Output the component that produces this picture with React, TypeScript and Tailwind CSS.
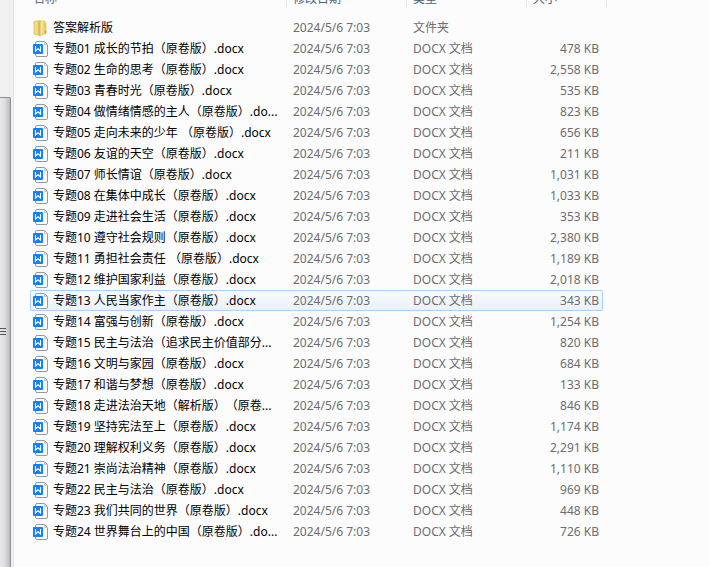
import React, { useState } from "react";

type FileEntry = {
  name: string;
  kind: "folder" | "docx";
  size: string;
};

const MODIFIED = "2024/5/6 7:03";

const files: FileEntry[] = [
  { name: "答案解析版", kind: "folder", size: "" },
  { name: "专题01 成长的节拍（原卷版）.docx", kind: "docx", size: "478 KB" },
  { name: "专题02 生命的思考（原卷版）.docx", kind: "docx", size: "2,558 KB" },
  { name: "专题03 青春时光（原卷版）.docx", kind: "docx", size: "535 KB" },
  { name: "专题04 做情绪情感的主人（原卷版）.do...", kind: "docx", size: "823 KB" },
  { name: "专题05 走向未来的少年 （原卷版）.docx", kind: "docx", size: "656 KB" },
  { name: "专题06 友谊的天空（原卷版）.docx", kind: "docx", size: "211 KB" },
  { name: "专题07 师长情谊（原卷版）.docx", kind: "docx", size: "1,031 KB" },
  { name: "专题08 在集体中成长（原卷版）.docx", kind: "docx", size: "1,033 KB" },
  { name: "专题09 走进社会生活（原卷版）.docx", kind: "docx", size: "353 KB" },
  { name: "专题10 遵守社会规则（原卷版）.docx", kind: "docx", size: "2,380 KB" },
  { name: "专题11 勇担社会责任 （原卷版）.docx", kind: "docx", size: "1,189 KB" },
  { name: "专题12 维护国家利益（原卷版）.docx", kind: "docx", size: "2,018 KB" },
  { name: "专题13 人民当家作主（原卷版）.docx", kind: "docx", size: "343 KB" },
  { name: "专题14 富强与创新（原卷版）.docx", kind: "docx", size: "1,254 KB" },
  { name: "专题15 民主与法治（追求民主价值部分...", kind: "docx", size: "820 KB" },
  { name: "专题16 文明与家园（原卷版）.docx", kind: "docx", size: "684 KB" },
  { name: "专题17 和谐与梦想（原卷版）.docx", kind: "docx", size: "133 KB" },
  { name: "专题18 走进法治天地（解析版）（原卷...", kind: "docx", size: "846 KB" },
  { name: "专题19 坚持宪法至上（原卷版）.docx", kind: "docx", size: "1,174 KB" },
  { name: "专题20 理解权利义务（原卷版）.docx", kind: "docx", size: "2,291 KB" },
  { name: "专题21 崇尚法治精神（原卷版）.docx", kind: "docx", size: "1,110 KB" },
  { name: "专题22 民主与法治（原卷版）.docx", kind: "docx", size: "969 KB" },
  { name: "专题23 我们共同的世界（原卷版）.docx", kind: "docx", size: "448 KB" },
  { name: "专题24 世界舞台上的中国（原卷版）.do...", kind: "docx", size: "726 KB" },
];

const FolderIcon = () => (
  <svg viewBox="0 0 16 16" className="h-4 w-4 shrink-0" aria-hidden="true">
    <path d="M1 1.5 7 0.5V15.5L1 14Z" fill="#f1dc83" stroke="#d5b850" strokeWidth="0.7" />
    <path d="M5 2 7 1V15.5L5 15Z" fill="#dcbf59" />
    <path d="M7 1H12V13.5L7 15.5Z" fill="#f3e294" stroke="#d5b850" strokeWidth="0.7" />
    <path d="M10.5 3 13.5 2.5V14L10.5 14.5Z" fill="#e3ca6b" />
    <path d="M12.5 11V13" stroke="#6ba7a8" strokeWidth="1" />
  </svg>
);

const DocxIcon = () => (
  <svg viewBox="0 0 16 16" className="h-4 w-4 shrink-0" aria-hidden="true">
    <path
      d="M4 0.5H11.5L14.5 3.5V14Q14.5 15.5 13 15.5H4Q2.5 15.5 2.5 14V2Q2.5 0.5 4 0.5Z"
      fill="#fff"
      stroke="#9498a8"
    />
    <path d="M11.5 0.5V3.5H14.5" fill="none" stroke="#c4c7d0" />
    <rect x="0" y="3" width="10" height="10" rx="1" fill="#1280f8" />
    <path d="M2.5 5V10L5 7.8L7.5 10V5" fill="none" stroke="#fff" strokeWidth="1.1" />
  </svg>
);

const headers = ["名称", "修改日期", "类型", "大小"];

const App = () => {
  const [active, setActive] = useState(13);

  return (
    <div className="flex min-h-screen bg-[#fcfcfc] font-['Noto_Sans','Noto_Sans_CJK_SC',sans-serif] text-xs [text-spacing-trim:space-all]">
      <aside className="flex w-[14px] shrink-0 flex-col border-r border-[#d6e5f5] bg-[#f0f0f0]">
        <div className="h-[97px] shrink-0" />
        <div className="mr-[2px] flex grow flex-col items-start rounded-tr-xs border-t border-r border-[#8e8e8e] bg-linear-to-r from-[#e9e9eb] via-[#dcdcde] to-[#b9b9bc] pt-[230px]">
          <div className="flex w-[6px] flex-col gap-[2px]">
            <div className="h-px bg-[#555]" />
            <div className="h-px bg-[#555]" />
            <div className="h-px bg-[#555]" />
          </div>
        </div>
      </aside>

      <main className="min-w-0 grow overflow-hidden pl-4">
        <table className="w-[577px] table-fixed border-separate border-spacing-0">
          <colgroup>
            <col className="w-[257px]" />
            <col className="w-[120px]" />
            <col className="w-[120px]" />
            <col className="w-[76px]" />
            <col />
          </colgroup>
          <thead>
            <tr className="h-[17px] text-[#4c607a]">
              {headers.map((title, index) => (
                <th
                  key={title}
                  colSpan={index === headers.length - 1 ? 2 : 1}
                  className="p-0 align-top font-normal"
                >
                  <div
                    className={`flex h-[7px] items-end border-r border-[#e0eaf7] ${index === 0 ? "pl-[3px]" : "pl-[6px]"}`}
                  >
                    <span className="leading-4">{title}</span>
                  </div>
                </th>
              ))}
            </tr>
          </thead>
          <tbody>
            {files.map((file, index) => {
              const cell =
                index === active
                  ? "h-[21px] border-y border-[#aecff7] bg-linear-to-b from-[#f8fbfe] to-[#e9f1fc] p-0"
                  : "h-[21px] border-y border-transparent p-0";
              return (
                <tr key={file.name} onClick={() => setActive(index)} className="leading-4 text-[#6d6d6d]">
                  <td className={`${cell} rounded-l-xs border-l pl-[2px] text-black`}>
                    <div className="flex items-center gap-1 whitespace-nowrap">
                      {file.kind === "folder" ? <FolderIcon /> : <DocxIcon />}
                      <span>{file.name}</span>
                    </div>
                  </td>
                  <td className={`${cell} pl-[6px]`}>{MODIFIED}</td>
                  <td className={`${cell} pl-[6px]`}>{file.kind === "folder" ? "文件夹" : "DOCX 文档"}</td>
                  <td className={`${cell} rounded-r-xs border-r pr-[3px] text-right`}>{file.size}</td>
                </tr>
              );
            })}
          </tbody>
        </table>
      </main>
    </div>
  );
};

export default App;
